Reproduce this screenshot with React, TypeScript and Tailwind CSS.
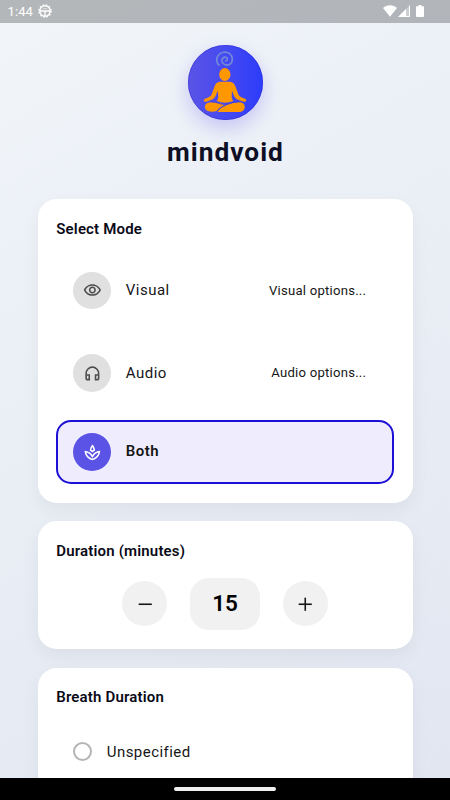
import React, { useState } from 'react';
import { MdOutlineHeadphones, MdOutlineSpa, MdOutlineVisibility } from 'react-icons/md';
import { Minus, Plus } from 'lucide-react';
import type { IconType } from 'react-icons';

type Mode = 'Visual' | 'Audio' | 'Both';

const modes: { name: Mode; icon: IconType; options?: string }[] = [
  { name: 'Visual', icon: MdOutlineVisibility, options: 'Visual options...' },
  { name: 'Audio', icon: MdOutlineHeadphones, options: 'Audio options...' },
  { name: 'Both', icon: MdOutlineSpa },
];

const StatusBar = () => (
  <div className="flex h-[22.5px] shrink-0 items-center bg-black/25 pl-[7.5px] pr-[26px] text-white">
    <span className="text-[13px] leading-none tracking-[0.1px]">1:44</span>
    <svg className="ml-[5px] size-[14px]" viewBox="0 0 14 14" fill="none" stroke="currentColor">
      <circle cx="7" cy="7" r="5.2" strokeWidth="1.4" />
      <circle cx="7" cy="7" r="6.2" strokeWidth="1.2" strokeDasharray="1.6 1.65" />
      <path d="M2 7h10M7 7v5" strokeWidth="1.3" />
      <path d="M4.6 4.8h4.8" strokeWidth="1" opacity=".6" />
    </svg>
    <div className="ml-auto flex items-center">
      <svg className="h-[12px] w-[14px]" viewBox="0 0 14 12" fill="currentColor">
        <path d="M0 2.9C4-.7 10-.7 14 2.9L7 11.7z" />
      </svg>
      <svg className="ml-[1px] h-[12px] w-[12px]" viewBox="0 0 12 12" fill="currentColor">
        <path d="M0 12 12 0v12z" opacity=".35" />
        <path d="M0 12 8 4v8zM11 1l1-1v12H8v-1h3z" />
      </svg>
      <svg className="ml-[6px] h-[12px] w-[8px]" viewBox="0 0 8 12" fill="currentColor">
        <path d="M2.5 0h3v1.2h1.7q.8 0 .8.8v9.2q0 .8-.8.8H.8q-.8 0-.8-.8V2q0-.8.8-.8h1.7z" />
      </svg>
    </div>
  </div>
);

const Logo = () => (
  <div className="size-[75px] rounded-full bg-linear-to-r from-[#5b53e6] to-[#2c3cfb] shadow-[0_8px_20px_rgba(90,80,240,0.28)]">
    <svg className="size-full" viewBox="39 30 225 225">
      <circle cx="151.500" cy="142.500" r="111.500" fill="none" stroke="#2b25d0" strokeWidth="1.6" />
      {/* spiral above the head */}
      <path
        d="M132 90C124 84 123 70 129 62C137 51 154 48 164 56C174 64 174 79 167 86C159 94 144 90 141 80C139 71 146 65 153 67C159 69 159 77 152 78"
        fill="none"
        stroke="#7189d8"
        strokeWidth="5"
        strokeLinecap="round"
      />
      <g fill="#ff9800">
        <ellipse cx="149.500" cy="118.500" rx="17" ry="19.500" />
        <path d="M137 140H162C174 140 179 147 182 156L190 178C192 183 196 186 202 188L210 191C217 194 214 201 207 200L193 196C184 193 180 189 177 182L171 167L170 185Q170 192 175 198Q150 208 125 198Q130 192 130 185L128 167L122 182C119 189 115 193 106 196L93 200C86 201 84 194 90 191L98 188C104 186 108 183 110 178L118 156C121 147 125 140 137 140Z" />
        <path d="M108 202C91 203 88 213 91 221C95 231 111 231 124 229L134 218L153 208C138 208 126 202 108 202Z" />
        <path d="M191 202C174 202 160 209 145 215C137 219 130 224 127 231H190C202 231 209 225 209 216C209 207 203 202 191 202Z" />
      </g>
      <path d="M104 200Q120 200 133 206Q144 210 154 208Q134 216 126 230M152 208Q168 201 196 200" fill="none" stroke="#473fd9" strokeWidth="2.200" />
    </svg>
  </div>
);

const Card: React.FC<{ title: string; children: React.ReactNode }> = ({ title, children }) => (
  <section className="shrink-0 rounded-[18.75px] bg-white p-[18.75px] shadow-[0_7px_18px_rgba(0,0,0,0.05)]">
    <h2 className="mb-[15px] h-[22.5px] text-[15px] leading-[22px] font-semibold tracking-[0.17px] text-[#0a0a18]">{title}</h2>
    {children}
  </section>
);

export default function App() {
  const [mode, setMode] = useState<Mode>('Both');
  const [duration, setDuration] = useState(15);

  return (
    <div className="flex h-[800px] w-[450px] flex-col overflow-hidden bg-linear-[151deg] from-[#f1f5f9] to-[#e1e6f1] font-['Roboto',sans-serif] text-[#161616]">
      <StatusBar />

      <main className="flex min-h-0 flex-1 flex-col overflow-hidden px-[37.5px] pt-[22.5px]">
        <header className="flex h-[153.75px] shrink-0 flex-col items-center">
          <Logo />
          <h1 className="mt-[15px] pl-[1px] text-[26.25px] leading-[34px] font-bold tracking-[1px] text-[#0e0e24]">mindvoid</h1>
        </header>

        <div className="flex flex-col gap-[18.75px]">
          <Card title="Select Mode">
            <div className="flex flex-col gap-[11.25px]">
              {modes.map(({ name, icon: Icon, options }) => {
                const selected = mode === name;
                return (
                  <div
                    key={name}
                    onClick={() => setMode(name)}
                    className={`flex items-center rounded-[15px] border-2 pr-[25.5px] pl-[15px] ${options ? 'h-[71.25px]' : 'h-[63.75px]'} ${
                      selected ? 'border-[#1d0fd6] bg-[#efedfd]' : 'border-transparent'
                    }`}
                  >
                    <div
                      className={`mr-[15px] flex size-[37.5px] items-center justify-center rounded-full ${
                        selected ? 'bg-[#5b53e6] text-white' : 'bg-[#e0e0e0] text-[#4d4d4d]'
                      }`}
                    >
                      <Icon className="size-[18.75px]" />
                    </div>
                    <span className={`text-[15px] ${selected ? 'pb-[1.5px] font-semibold tracking-[0.45px]' : 'tracking-[0.5px]'}`}>{name}</span>
                    {options && <span className="ml-auto text-[13.125px] tracking-[0.24px]">{options}</span>}
                  </div>
                );
              })}
            </div>
          </Card>

          <Card title="Duration (minutes)">
            <div className="flex items-center justify-center gap-[22.5px]">
              <button onClick={() => setDuration(duration - 1)} className="flex size-[45px] items-center justify-center rounded-full bg-[#f1f1f1]">
                <Minus className="size-[22.5px]" strokeWidth={1.7} strokeLinecap="butt" />
              </button>
              <div className="flex h-[52.5px] w-[70.5px] items-center justify-center rounded-[18.75px] bg-[#f1f1f1] text-[22.5px] font-semibold text-black">
                {duration}
              </div>
              <button onClick={() => setDuration(duration + 1)} className="flex size-[45px] items-center justify-center rounded-full bg-[#f1f1f1]">
                <Plus className="size-[22.5px]" strokeWidth={1.7} strokeLinecap="butt" />
              </button>
            </div>
          </Card>

          <Card title="Breath Duration">
            <div className="flex h-[56px] items-center pl-[16.5px]">
              <span className="mr-[15px] size-[19px] rounded-full border-2 border-[#b5b5b5]" />
              <span className="text-[15px] tracking-[0.45px]">Unspecified</span>
            </div>
          </Card>
        </div>
      </main>

      <div className="flex h-[22.5px] shrink-0 items-center justify-center bg-black">
        <div className="h-[4px] w-[102px] rounded-full bg-[#f0eff0]" />
      </div>
    </div>
  );
}
